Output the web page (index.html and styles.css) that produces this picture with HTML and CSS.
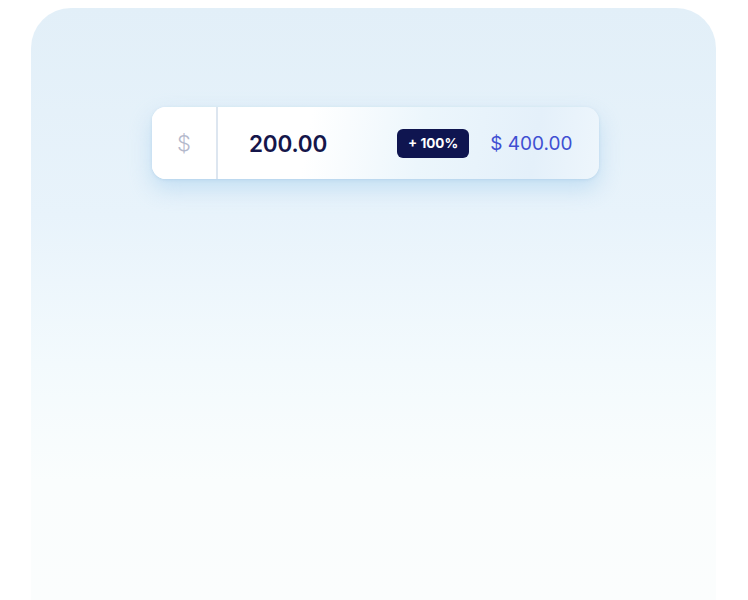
FILE: index.html
```html
<!DOCTYPE html>
<html>
<head>
<meta charset="utf-8">
<link rel="stylesheet" href="styles.css">
</head>
<body>
<div class="panel">
  <div class="field">
    <div class="cur">$</div>
    <div class="main">
      <span class="amount">200.00</span>
      <span class="badge">+ 100%</span>
      <span class="total">$ 400.00</span>
    </div>
  </div>
</div>
</body>
</html>
```
FILE: styles.css
```css
html, body {
  margin: 0;
  padding: 0;
  background: #ffffff;
  font-family: Inter, "Noto Sans", sans-serif;
}
.panel {
  margin: 8px 32px 0 31px;
  height: 592px;
  border-radius: 40px 40px 0 0;
  background: linear-gradient(180deg, #e2eff8 0%, #e8f3fb 35%, #f3fafd 60%, #fafdfd 80%, #fbfdfd 100%);
  padding-top: 99px;
  box-sizing: border-box;
}
.field {
  margin-left: 121px;
  width: 447px;
  height: 72px;
  border-radius: 14px;
  display: flex;
  background: linear-gradient(100deg, #ffffff 0%, #ffffff 35%, #ecf6fc 60%, #e4f0fa 85%, #eef6fc 100%);
  box-shadow: 0 10px 22px rgba(150, 200, 235, 0.45), 0 1px 3px rgba(170, 200, 225, 0.5);
  overflow: hidden;
}
.cur {
  width: 64px;
  border-right: 2px solid #dde6f0;
  display: flex;
  align-items: center;
  justify-content: center;
  font-size: 22px;
  font-weight: 300;
  color: #b4b9cc;
  background: #ffffff;
}
.main {
  flex: 1;
  display: flex;
  align-items: center;
  padding-left: 31px;
}
.amount {
  font-size: 22.5px;
  font-weight: 600;
  color: #15164a;
  letter-spacing: -0.2px;
}
.badge {
  margin-left: 70px;
  background: #0f1550;
  color: #ffffff;
  font-size: 13.5px;
  font-weight: 700;
  height: 29px;
  width: 72px;
  border-radius: 6px;
  display: flex;
  align-items: center;
  justify-content: center;
}
.total {
  margin-left: 21px;
  font-size: 19px;
  font-weight: 400;
  color: #3f4fd2;
}
```
